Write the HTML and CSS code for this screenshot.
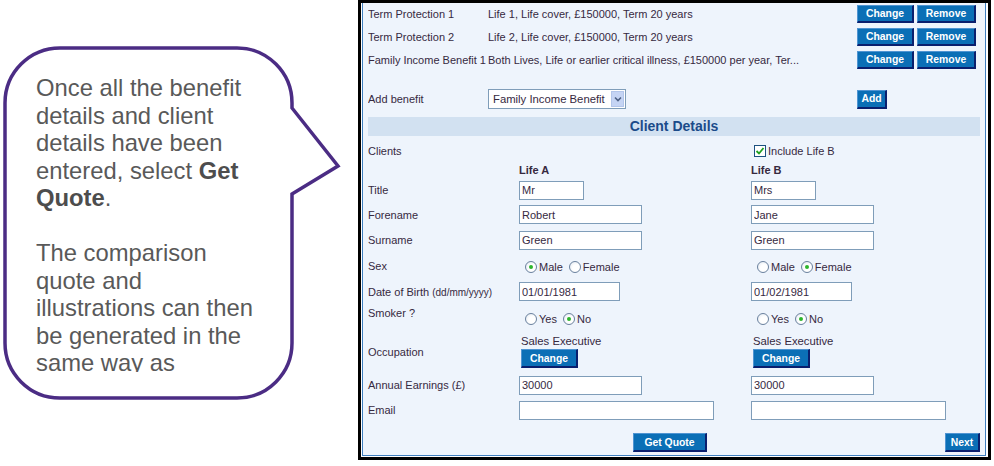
FILE: index.html
```html
<!DOCTYPE html>
<html lang="en">
<head>
<meta charset="utf-8">
<title>Client Details</title>
<link rel="stylesheet" href="styles.css">
</head>
<body>
<div class="page">
  <aside class="callout">
    <svg class="bubble" width="358" height="466" viewBox="0 0 358 466" aria-hidden="true">
      <path d="M60 48 H237 A55 55 0 0 1 292 103 V108 L338 166 L292 194 V343 A55 55 0 0 1 237 398 H60 A55 55 0 0 1 5 343 V103 A55 55 0 0 1 60 48 Z" fill="#fff" stroke="#4b2c84" stroke-width="3.5" stroke-linejoin="miter"/>
    </svg>
    <div class="callout-text">
      <p>Once all the benefit details and client details have been entered, select <b>Get Quote</b>.</p>
      <p>The comparison quote and illustrations can then be generated in the same way as</p>
    </div>
  </aside>

  <section class="shot">
    <div class="panel">
      <div class="brow first">
        <span class="bname">Term Protection 1</span>
        <span class="bdesc">Life 1, Life cover, £150000, Term 20 years</span>
        <span class="bact"><button class="btn sm w57">Change</button><button class="btn sm w59">Remove</button></span>
      </div>
      <div class="brow">
        <span class="bname">Term Protection 2</span>
        <span class="bdesc">Life 2, Life cover, £150000, Term 20 years</span>
        <span class="bact"><button class="btn sm w57">Change</button><button class="btn sm w59">Remove</button></span>
      </div>
      <div class="brow">
        <span class="bname">Family Income Benefit 1</span>
        <span class="bdesc">Both Lives, Life or earlier critical illness, £150000 per year, Ter...</span>
        <span class="bact"><button class="btn sm w57">Change</button><button class="btn sm w59">Remove</button></span>
      </div>

      <div class="brow addrow">
        <span class="bname">Add benefit</span>
        <span class="bdesc">
          <span class="select"><span class="sel-text">Family Income Benefit</span><span class="sel-arrow"><svg width="8" height="6" viewBox="0 0 8 6"><path d="M1 1.5 L4 4.5 L7 1.5" fill="none" stroke="#4d6185" stroke-width="1.6"/></svg></span></span>
        </span>
        <span class="bact"><button class="btn w29">Add</button></span>
      </div>

      <h2 class="bar">Client Details</h2>

      <div class="frow r-clients">
        <span class="lbl">Clients</span>
        <span></span>
        <span class="incl"><span class="check"><svg width="10" height="10" viewBox="0 0 10 10"><path d="M1.5 5 L4 7.5 L8.5 2" fill="none" stroke="#1fa01f" stroke-width="1.8"/></svg></span>Include Life B</span>
      </div>
      <div class="frow r-life">
        <span></span>
        <span class="life">Life A</span>
        <span class="life">Life B</span>
      </div>
      <div class="frow r-title">
        <span class="lbl">Title</span>
        <span><input class="inp w65" type="text" value="Mr"></span>
        <span><input class="inp w65" type="text" value="Mrs"></span>
      </div>
      <div class="frow r-fore">
        <span class="lbl">Forename</span>
        <span><input class="inp w123" type="text" value="Robert"></span>
        <span><input class="inp w123" type="text" value="Jane"></span>
      </div>
      <div class="frow r-sur">
        <span class="lbl">Surname</span>
        <span><input class="inp w123" type="text" value="Green"></span>
        <span><input class="inp w123" type="text" value="Green"></span>
      </div>
      <div class="frow r-sex">
        <span class="lbl">Sex</span>
        <span class="opts"><span class="opt"><span class="radio on"></span>Male</span><span class="opt"><span class="radio"></span>Female</span></span>
        <span class="opts"><span class="opt"><span class="radio"></span>Male</span><span class="opt"><span class="radio on"></span>Female</span></span>
      </div>
      <div class="frow r-dob">
        <span class="lbl">Date of Birth <small>(dd/mm/yyyy)</small></span>
        <span><input class="inp w101" type="text" value="01/01/1981"></span>
        <span><input class="inp w101" type="text" value="01/02/1981"></span>
      </div>
      <div class="frow r-smoke">
        <span class="lbl top">Smoker ?</span>
        <span class="opts low"><span class="opt"><span class="radio"></span>Yes</span><span class="opt"><span class="radio on"></span>No</span></span>
        <span class="opts low"><span class="opt"><span class="radio"></span>Yes</span><span class="opt"><span class="radio on"></span>No</span></span>
      </div>
      <div class="frow r-occ">
        <span class="lbl">Occupation</span>
        <span class="occ"><span class="occ-name">Sales Executive</span><button class="btn w57">Change</button></span>
        <span class="occ"><span class="occ-name">Sales Executive</span><button class="btn w57">Change</button></span>
      </div>
      <div class="frow r-earn">
        <span class="lbl">Annual Earnings (£)</span>
        <span><input class="inp w123" type="text" value="30000"></span>
        <span><input class="inp w123" type="text" value="30000"></span>
      </div>
      <div class="frow r-email">
        <span class="lbl">Email</span>
        <span><input class="inp w195" type="text" value=""></span>
        <span><input class="inp w195" type="text" value=""></span>
      </div>

      <div class="actions">
        <button class="btn w74">Get Quote</button>
        <button class="btn w35 next">Next</button>
      </div>
    </div>
  </section>
</div>
</body>
</html>
```

FILE: styles.css
```css
* { box-sizing: border-box; }

html, body {
  margin: 0;
  padding: 0;
  background: #fff;
}

.page {
  display: flex;
  align-items: flex-start;
  width: 994px;
  height: 466px;
  overflow: hidden;
}

/* ---------- callout ---------- */
.callout {
  position: relative;
  flex: none;
  width: 358px;
  height: 466px;
}

.bubble {
  position: absolute;
  left: 0;
  top: 0;
}

.callout-text {
  position: relative;
  margin: 74px 0 0 36px;
  width: 224px;
  height: 298px;
  overflow: hidden;
  font-family: "Liberation Sans", Arial, sans-serif;
  font-size: 23.8px;
  line-height: 27.5px;
  color: #595959;
}

.callout-text p {
  margin: 0 0 27.5px 0;
}

.callout-text b {
  font-weight: bold;
  color: #4d4d4d;
}

/* ---------- screenshot panel ---------- */
.shot {
  flex: none;
  width: 633px;
  height: 460px;
  border: 3px solid #000;
  padding: 0 2px 1px 1px;
  background: #fff;
}

.panel {
  height: 100%;
  border: 1px solid #3f7fbf;
  border-top: none;
  background: #eef4fc;
  padding: 0 5px 3px 5px;
  font-family: "Liberation Sans", Arial, sans-serif;
  font-size: 11px;
  color: #36293f;
}

.brow {
  display: grid;
  grid-template-columns: 120px 1fr 123px;
  align-items: center;
  height: 23px;
}

.brow.first { height: 22px; }

.bname, .bdesc {
  white-space: nowrap;
  overflow: hidden;
}

.bact {
  display: flex;
  gap: 3px;
}

.addrow {
  height: 22px;
  margin-top: 17px;
}

.select {
  display: flex;
  align-items: center;
  width: 138px;
  height: 20px;
  border: 1px solid #7f9db9;
  background: #fff;
  padding: 0 1px 0 4px;
  font-size: 11.3px;
  color: #36293f;
}

.sel-text {
  flex: 1;
  white-space: nowrap;
}

.sel-arrow {
  display: flex;
  align-items: center;
  justify-content: center;
  width: 13px;
  height: 16px;
  background: #c5d4f4;
  border: 1px solid #b2c5ea;
}

.bar {
  margin: 7px 0 5px 0;
  height: 19px;
  background: #d2e1f1;
  color: #1b4b8a;
  font-size: 14px;
  font-weight: bold;
  line-height: 19px;
  text-align: center;
}

/* ---------- buttons ---------- */
.btn {
  display: inline-flex;
  align-items: center;
  justify-content: center;
  height: 19px;
  padding: 0;
  margin: 0;
  font-family: "Liberation Sans", Arial, sans-serif;
  font-size: 10.4px;
  font-weight: bold;
  color: #fff;
  background: #0b6fb6;
  border-style: solid;
  border-width: 1px 2px 2px 1px;
  border-color: #4f94d2 #0a1f6e #0a1f6e #4f94d2;
  cursor: pointer;
}

.btn.sm { height: 18px; }
.w29 { width: 30px; }
.w35 { width: 35px; }
.w57 { width: 57px; }
.w59 { width: 59px; }
.w74 { width: 74px; }

/* ---------- form grid ---------- */
.frow {
  display: grid;
  grid-template-columns: 151px 232px 1fr;
  align-items: center;
}

.r-clients { height: 19px; }
.r-life    { height: 19px; }
.r-title   { height: 22px; }
.r-fore    { height: 27px; }
.r-sur     { height: 24px; }
.r-sex     { height: 27px; }
.r-dob     { height: 25px; }
.r-smoke   { height: 24px; }
.r-occ     { height: 47px; }
.r-earn    { height: 20px; }
.r-email   { height: 30px; }

.lbl small { font-size: 10px; }

.lbl.top {
  align-self: start;
  padding-top: 3px;
}

.life { font-weight: bold; }

.incl {
  display: flex;
  align-items: center;
  padding-left: 3px;
}

.check {
  display: inline-flex;
  align-items: center;
  justify-content: center;
  width: 12px;
  height: 12px;
  border: 1px solid #1c5180;
  background: #fff;
  margin-right: 2px;
}

.inp {
  display: block;
  height: 19px;
  border: 1px solid #7f9db9;
  background: #fff;
  padding: 0 2px;
  margin: 0;
  font-family: "Liberation Sans", Arial, sans-serif;
  font-size: 11px;
  color: #36293f;
  outline: none;
}

.w65  { width: 65px; }
.w101 { width: 101px; }
.w123 { width: 123px; }
.w195 { width: 195px; }

.opts {
  display: flex;
  align-items: center;
  gap: 6px;
  padding-left: 6px;
  padding-top: 2px;
}

.opts.low {
  align-self: end;
  padding-top: 0;
  padding-bottom: 3px;
}

.opt {
  display: inline-flex;
  align-items: center;
  gap: 2px;
}

.radio {
  position: relative;
  display: inline-block;
  width: 12px;
  height: 12px;
  border-radius: 50%;
  border: 1px solid #6a819e;
  background: radial-gradient(circle at 60% 60%, #ffffff 40%, #dce4ee 100%);
}

.radio.on::after {
  content: "";
  position: absolute;
  left: 3px;
  top: 3px;
  width: 4px;
  height: 4px;
  border-radius: 50%;
  background: #2cb52c;
}

.occ {
  display: flex;
  flex-direction: column;
  align-items: flex-start;
  padding-left: 2px;
}

.occ-name {
  font-size: 11.3px;
  line-height: 13px;
  margin-bottom: 1px;
}

.actions {
  display: flex;
  margin-top: 8px;
  padding-left: 265px;
}

.next { margin-left: auto; }
```
